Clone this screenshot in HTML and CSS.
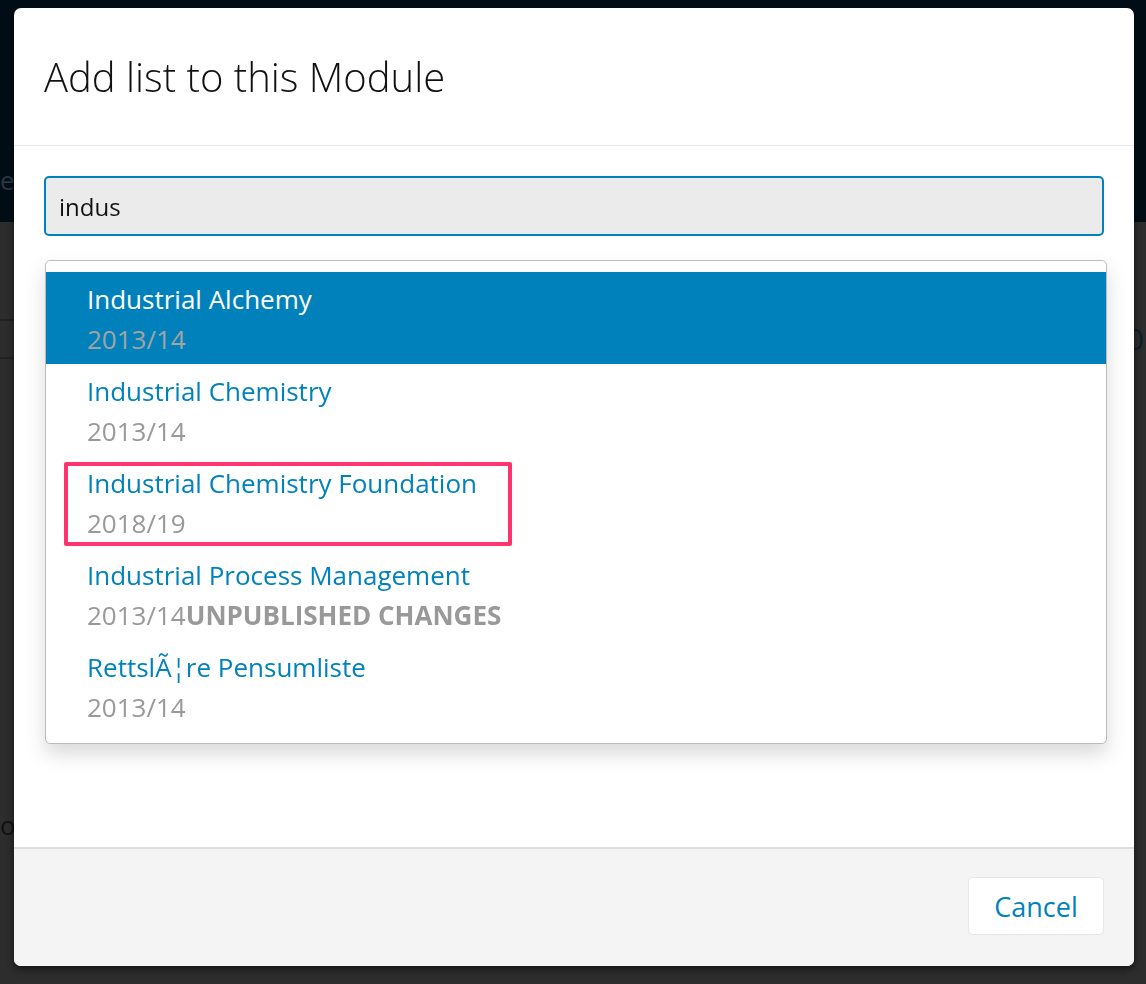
FILE: index.html
```html
<!DOCTYPE html>
<html lang="en">
<head>
  <meta charset="UTF-8" />
  <meta name="viewport" content="width=device-width, initial-scale=1.0" />
  <title>Add list to this Module</title>
  <link rel="stylesheet" href="styles.css">
</head>
<body>
  <!-- Page behind the dialog -->
  <div class="page">
    <header class="page-header">
      <span class="page-crumb">ec</span>
    </header>
    <div class="page-body">
      <div class="page-row">
        <span class="page-box"></span>
        <span class="page-count">0</span>
      </div>
      <div class="page-foot">o</div>
    </div>
  </div>
  <div class="backdrop"></div>

  <!-- Dialog -->
  <div class="modal">
    <div class="modal-header">
      <h3>Add list to this Module</h3>
    </div>
    <div class="modal-body">
      <input class="search" type="text" value="indus" />
      <ul class="typeahead">
        <li class="active">
          <a href="#"><span class="name">Industrial Alchemy</span><span class="meta">2013/14</span></a>
        </li>
        <li>
          <a href="#"><span class="name">Industrial Chemistry</span><span class="meta">2013/14</span></a>
        </li>
        <li>
          <a href="#"><span class="name">Industrial Chemistry Foundation</span><span class="meta">2018/19</span></a>
          <span class="annotation"></span>
        </li>
        <li>
          <a href="#"><span class="name">Industrial Process Management</span><span class="meta">2013/14<strong>Unpublished changes</strong></span></a>
        </li>
        <li>
          <a href="#"><span class="name">RettslÃ¦re Pensumliste</span><span class="meta">2013/14</span></a>
        </li>
      </ul>
    </div>
    <div class="modal-footer">
      <button class="btn">Cancel</button>
    </div>
  </div>
</body>
</html>
```

FILE: styles.css
```css
html, body {
  margin: 0;
  padding: 0;
  height: 100%;
}
body {
  font-family: "Open Sans", "Liberation Sans", sans-serif;
  background-color: #2e2e2e;
  overflow: hidden;
}
.page-header {
  height: 222px;
  background-color: #020e17;
  padding-top: 160px;
  box-sizing: border-box;
}
.page-crumb {
  display: inline-block;
  font-size: 26px;
  line-height: 40px;
  color: #2a3a46;
}
.page-body {
  padding-top: 96px;
}
.page-row {
  display: flex;
  justify-content: space-between;
  align-items: center;
}
.page-box {
  display: inline-block;
  width: 20px;
  height: 36px;
  border: 2px solid #232323;
  border-left: none;
}
.page-count {
  font-size: 30px;
  color: #0a2130;
  margin-right: 2px;
}
.page-foot {
  margin-top: 448px;
  font-size: 26px;
  color: #111;
}
.backdrop {
  position: fixed;
  inset: 0;
  background: rgba(0, 0, 0, 0.02);
}
.modal {
  position: fixed;
  top: 8px;
  left: 14px;
  width: 1120px;
  height: 958px;
  background: #fff;
  border-radius: 7px;
  box-shadow: 0 3px 9px rgba(0, 0, 0, 0.6);
  display: flex;
  flex-direction: column;
  overflow: hidden;
}
.modal-header {
  height: 138px;
  box-sizing: border-box;
  border-bottom: 1px solid #e8e8e8;
  padding: 0 30px;
  display: flex;
  align-items: center;
  flex-shrink: 0;
}
.modal-header h3 {
  margin: 0;
  font-size: 40px;
  font-weight: 300;
  color: #111;
}
.modal-body {
  flex: 1;
  padding: 30px 30px 0;
}
.search {
  display: block;
  box-sizing: border-box;
  width: 1060px;
  height: 60px;
  border: 2px solid #0082bc;
  border-radius: 5px;
  background: #ebebeb;
  padding: 0 13px;
  font-family: inherit;
  font-size: 24px;
  color: #111;
  outline: none;
}
.typeahead {
  list-style: none;
  margin: 24px 0 0 1px;
  padding: 11px 0;
  width: 1062px;
  box-sizing: border-box;
  border: 1px solid #bcbcbc;
  border-radius: 5px;
  background: #fff;
  box-shadow: 0 10px 20px rgba(0, 0, 0, 0.15);
}
.typeahead li {
  position: relative;
}
.typeahead a {
  display: flex;
  flex-direction: column;
  padding: 7px 41px 5px;
  text-decoration: none;
  font-size: 26px;
  line-height: 40px;
}
.typeahead .name {
  color: #0082bc;
}
.typeahead .meta {
  color: #999;
}
.typeahead .meta strong {
  font-weight: 700;
  text-transform: uppercase;
}
.typeahead li.active a {
  background-color: #0081bb;
}
.typeahead li.active .name {
  color: #fff;
}
.typeahead li.active .meta {
  color: #a3a3a3;
}
.annotation {
  position: absolute;
  top: 6px;
  left: 18px;
  width: 448px;
  height: 84px;
  box-sizing: border-box;
  border: 4px solid #ff336e;
  border-radius: 2px;
  pointer-events: none;
}
.modal-footer {
  height: 119px;
  box-sizing: border-box;
  flex-shrink: 0;
  border-top: 2px solid #dedede;
  background: #f4f4f4;
  display: flex;
  justify-content: flex-end;
  align-items: flex-start;
  padding: 28px 30px 0;
}
.btn {
  width: 136px;
  height: 58px;
  background: #fff;
  border: 1px solid #e6e6e6;
  border-radius: 5px;
  font-family: inherit;
  font-size: 27px;
  color: #0082bc;
  cursor: pointer;
}
```
